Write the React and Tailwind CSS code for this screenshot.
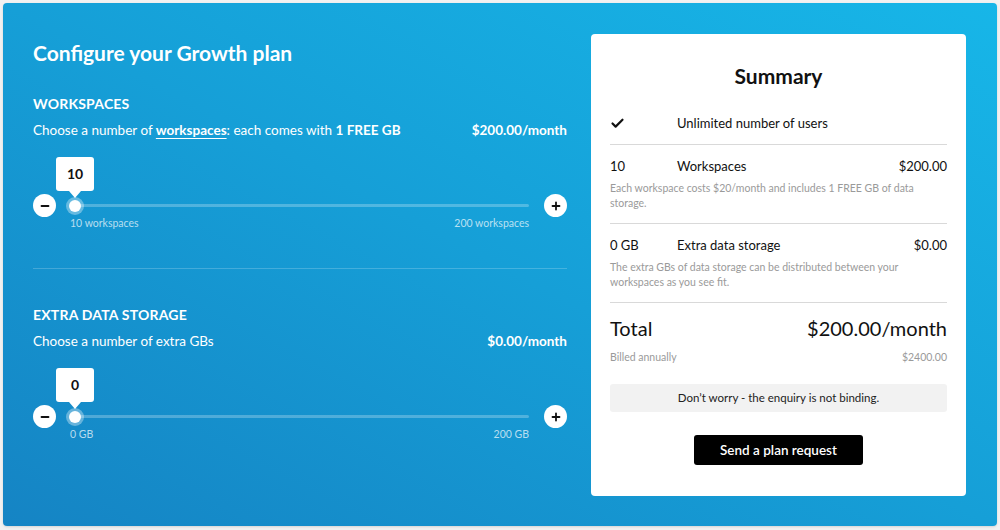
import React, { useState } from 'react';
import { Check } from 'lucide-react';

const font = { fontFamily: 'Lato, "Open Sans", sans-serif' };

const RoundButton = ({ type, onClick }) => (
  <button
    onClick={onClick}
    className="w-[23px] h-[23px] rounded-full bg-white flex items-center justify-center shrink-0"
  >
    <svg width="10" height="10" viewBox="0 0 10 10">
      <line x1="1.5" y1="5" x2="8.5" y2="5" stroke="#111" strokeWidth="1.8" strokeLinecap="round" />
      {type === 'plus' && (
        <line x1="5" y1="1.5" x2="5" y2="8.5" stroke="#111" strokeWidth="1.8" strokeLinecap="round" />
      )}
    </svg>
  </button>
);

const Slider = ({ value, min, max, step, onChange, minLabel, maxLabel }) => {
  const pct = ((value - min) / (max - min)) * 100;

  return (
    <div>
      <div className="flex items-center">
        <RoundButton type="minus" onClick={() => onChange(Math.max(min, value - step))} />
        <div className="relative flex-1 ml-[19px] mr-[15px] h-[23px] flex items-center">
          <div className="w-full h-[3px] rounded-full bg-white/25"></div>
          <div className="absolute top-1/2 w-0 h-0" style={{ left: `${pct}%` }}>
            {/* tooltip */}
            <div className="absolute left-0 -translate-x-1/2 bottom-[8px] flex flex-col items-center">
              <div className="w-[38px] h-[34px] bg-white rounded-[3px] flex items-center justify-center text-[14px] font-bold text-[#111]">
                {value}
              </div>
              <div className="w-0 h-0 border-l-[6px] border-r-[6px] border-t-[7px] border-l-transparent border-r-transparent border-t-white"></div>
            </div>
            <div className="absolute left-0 top-0 w-[12px] h-[12px] -translate-x-1/2 -translate-y-1/2 rounded-full bg-white ring-[3px] ring-white/35"></div>
          </div>
        </div>
        <RoundButton type="plus" onClick={() => onChange(Math.min(max, value + step))} />
      </div>
      <div className="flex justify-between pl-[37px] pr-[38px] text-[10.5px] leading-[14px] text-white/70 -mt-[1px]">
        <span>{minLabel}</span>
        <span>{maxLabel}</span>
      </div>
    </div>
  );
};

const SummaryRow = ({ qty, label, price, note }) => (
  <div className="pt-[12px] pb-[12px] border-b border-[#d9d9d9]">
    <div className="flex items-center text-[13px] leading-[18px] text-[#111]">
      <div className="w-[67px]">{qty}</div>
      <div className="flex-1">{label}</div>
      {price && <div>{price}</div>}
    </div>
    {note && (
      <p className="mt-[6px] text-[10.5px] leading-[15px] text-[#9a9a9a] pr-[20px]">{note}</p>
    )}
  </div>
);

const App = () => {
  const [workspaces, setWorkspaces] = useState(10);
  const [storage, setStorage] = useState(0);

  const workspaceCost = workspaces * 20;
  const storageCost = storage * 1;
  const monthly = workspaceCost + storageCost;

  return (
    <div className="w-full h-[530px] bg-[#f2f2f2] p-[3px]" style={font}>
      <div className="h-[523px] rounded-[4px] shadow-sm bg-linear-to-tr from-[#1584c4] via-[#169fd7] to-[#17b6e8] flex justify-between pl-[30px] pr-[31px] pt-[31px]">
        {/* Configurator */}
        <div className="w-[534px] pt-[5px] text-white">
          <h1 className="text-[21px] leading-[28px] font-bold">Configure your Growth plan</h1>

          <h2 className="mt-[28px] text-[14px] leading-[18px] font-bold tracking-[0.2px]">WORKSPACES</h2>
          <div className="mt-[8px] flex justify-between text-[13.5px] leading-[18px]">
            <span>
              Choose a number of{' '}
              <span className="font-bold underline underline-offset-[3px] decoration-1">workspaces</span>: each
              comes with <span className="font-bold">1 FREE GB</span>
            </span>
            <span className="font-bold">${workspaceCost.toFixed(2)}/month</span>
          </div>
          <div className="mt-[55px]">
            <Slider
              value={workspaces}
              min={10}
              max={200}
              step={1}
              onChange={setWorkspaces}
              minLabel="10 workspaces"
              maxLabel="200 workspaces"
            />
          </div>

          <div className="mt-[38px] h-px bg-white/20"></div>

          <h2 className="mt-[37px] text-[14px] leading-[18px] font-bold tracking-[0.2px]">EXTRA DATA STORAGE</h2>
          <div className="mt-[8px] flex justify-between text-[13.5px] leading-[18px]">
            <span>Choose a number of extra GBs</span>
            <span className="font-bold">${storageCost.toFixed(2)}/month</span>
          </div>
          <div className="mt-[55px]">
            <Slider
              value={storage}
              min={0}
              max={200}
              step={1}
              onChange={setStorage}
              minLabel="0 GB"
              maxLabel="200 GB"
            />
          </div>
        </div>

        {/* Summary card */}
        <div className="w-[375px] h-[462px] bg-white rounded-[4px] px-[19px] pt-[28px]">
          <h2 className="text-center text-[21px] leading-[28px] font-bold text-[#111]">Summary</h2>

          <div className="mt-[24px] pb-[12px] border-b border-[#d9d9d9] flex items-center text-[13px] leading-[18px] text-[#111]">
            <div className="w-[67px]">
              <Check size={15} strokeWidth={3.5} className="text-[#111]" />
            </div>
            <div>Unlimited number of users</div>
          </div>

          <SummaryRow
            qty={workspaces}
            label="Workspaces"
            price={`$${workspaceCost.toFixed(2)}`}
            note="Each workspace costs $20/month and includes 1 FREE GB of data storage."
          />
          <SummaryRow
            qty={`${storage} GB`}
            label="Extra data storage"
            price={`$${storageCost.toFixed(2)}`}
            note="The extra GBs of data storage can be distributed between your workspaces as you see fit."
          />

          <div className="pt-[11px]">
            <div className="flex justify-between text-[20px] leading-[28px] text-[#111]">
              <span>Total</span>
              <span>${monthly.toFixed(2)}/month</span>
            </div>
            <div className="mt-[8px] flex justify-between text-[10.5px] leading-[14px] text-[#9a9a9a]">
              <span>Billed annually</span>
              <span>${(monthly * 12).toFixed(2)}</span>
            </div>
          </div>

          <div className="mt-[20px] h-[28px] rounded-[3px] bg-[#f2f2f2] flex items-center justify-center text-[11.5px] text-[#222]">
            Don’t worry - the enquiry is not binding.
          </div>

          <div className="mt-[23px] flex justify-center">
            <button className="w-[169px] h-[30px] rounded-[3px] bg-black text-white text-[13.5px] font-semibold">
              Send a plan request
            </button>
          </div>
        </div>
      </div>
    </div>
  );
};

export default App;
